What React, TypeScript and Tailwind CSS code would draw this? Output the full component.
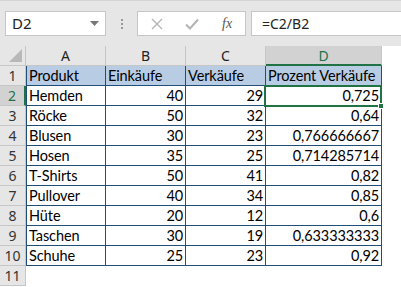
const rows = [
  { name: "Hemden", ek: 40, vk: 29, pct: "0,725" },
  { name: "Röcke", ek: 50, vk: 32, pct: "0,64" },
  { name: "Blusen", ek: 30, vk: 23, pct: "0,766666667" },
  { name: "Hosen", ek: 35, vk: 25, pct: "0,714285714" },
  { name: "T-Shirts", ek: 50, vk: 41, pct: "0,82" },
  { name: "Pullover", ek: 40, vk: 34, pct: "0,85" },
  { name: "Hüte", ek: 20, vk: 12, pct: "0,6" },
  { name: "Taschen", ek: 30, vk: 19, pct: "0,633333333" },
  { name: "Schuhe", ek: 25, vk: 23, pct: "0,92" },
];

const ui = { fontFamily: '"Noto Sans", "Open Sans", sans-serif' };
const cellFont = { fontFamily: 'Lato, "Liberation Sans", sans-serif' };

function RowHeader({ n, active }: { n: number; active?: boolean }) {
  return (
    <div
      style={ui}
      className={
        active
          ? "w-[26px] h-[20px] shrink-0 flex items-center justify-center bg-[#d2d2d2] text-[#217346] text-[14px] border-b border-[#c6c6c6] border-r-2 border-r-[#217346]"
          : "w-[26px] h-[20px] shrink-0 flex items-center justify-center bg-[#e6e6e6] text-[#333] text-[14px] border-b border-r border-[#c6c6c6]"
      }
    >
      {n}
    </div>
  );
}

function Toolbar() {
  return (
    <div className="h-[46px] bg-[#e6e6e6] border-t border-[#d4d4d4] flex items-start pt-[10px]">
      <div className="ml-[5px] w-[101px] h-[25px] bg-white border border-[#c6c6c6] flex items-center justify-between pl-[6px] pr-[6px]">
        <span style={ui} className="text-[15px] text-[#222]">D2</span>
        <svg width="9" height="5" viewBox="0 0 9 5">
          <path d="M0 0h9L4.5 5z" fill="#777" />
        </svg>
      </div>
      <div className="w-[31px] h-[25px] flex flex-col items-center justify-center gap-[2px]">
        <span className="w-[2px] h-[2px] bg-[#999]" />
        <span className="w-[2px] h-[2px] bg-[#999]" />
        <span className="w-[2px] h-[2px] bg-[#999]" />
      </div>
      <div className="w-[109px] h-[25px] bg-white border border-[#c6c6c6] flex items-center">
        <svg width="12" height="12" viewBox="0 0 12 12" className="ml-[13px]">
          <path d="M1 1l10 10M11 1L1 11" stroke="#b4b4b4" strokeWidth="1.4" />
        </svg>
        <svg width="14" height="12" viewBox="0 0 14 12" className="ml-[22px]">
          <path d="M1 6.5l4 4L13 1.5" stroke="#b4b4b4" strokeWidth="2" fill="none" />
        </svg>
        <span
          className="ml-[23px] text-[14px] italic text-[#555]"
          style={{ fontFamily: '"Liberation Serif", serif' }}
        >
          fx
        </span>
      </div>
      <div className="ml-[5px] flex-1 h-[25px] bg-white border border-[#c6c6c6] border-r-0 flex items-center pl-[10px]">
        <span style={ui} className="text-[14px] text-[#222]">=C2/B2</span>
      </div>
    </div>
  );
}

function ColumnHeaders() {
  const cols = ["A", "B", "C"];
  return (
    <div className="flex h-[20px]" style={ui}>
      <div className="w-[26px] h-[20px] shrink-0 bg-[#e6e6e6] border-r border-b border-[#c6c6c6] flex items-end justify-end pr-[3px] pb-[3px]">
        <svg width="13" height="13" viewBox="0 0 13 13">
          <path d="M13 0v13H0z" fill="#b8b8b8" />
        </svg>
      </div>
      {cols.map((c) => (
        <div
          key={c}
          className="w-[80px] h-[20px] shrink-0 bg-[#e6e6e6] border-r border-b border-[#c6c6c6] flex items-center justify-center text-[14px] text-[#222]"
        >
          {c}
        </div>
      ))}
      <div className="w-[116px] h-[20px] shrink-0 bg-[#d2d2d2] border-r border-[#c6c6c6] border-b-2 border-b-[#217346] flex items-center justify-center text-[14px] text-[#217346]">
        D
      </div>
      <div className="flex-1 h-[20px] bg-white" />
    </div>
  );
}

const cell =
  "h-[20px] shrink-0 border-r border-b border-[#1f4e79] flex items-end pb-[2px] text-[14.5px] tracking-[-0.1px] text-black px-[2px] leading-none whitespace-nowrap overflow-hidden";

export default function App() {
  return (
    <div className="w-[401px] h-[287px] bg-white overflow-hidden">
      <Toolbar />
      <ColumnHeaders />
      <div className="relative">
        <div className="flex" style={cellFont}>
          <RowHeader n={1} />
          <div className={`${cell} w-[80px] bg-[#b8cce4] border-l`}>Produkt</div>
          <div className={`${cell} w-[80px] bg-[#b8cce4]`}>Einkäufe</div>
          <div className={`${cell} w-[80px] bg-[#b8cce4]`}>Verkäufe</div>
          <div className={`${cell} w-[116px] bg-[#b8cce4]`}>Prozent Verkäufe</div>
        </div>
        {rows.map((r, i) => (
          <div className="flex" style={cellFont} key={r.name}>
            <RowHeader n={i + 2} active={i === 0} />
            <div className={`${cell} w-[80px] border-l`}>{r.name}</div>
            <div className={`${cell} w-[80px] justify-end`}>{r.ek}</div>
            <div className={`${cell} w-[80px] justify-end`}>{r.vk}</div>
            <div className={`${cell} w-[116px] justify-end`}>{r.pct}</div>
          </div>
        ))}
        <div className="flex">
          <RowHeader n={11} />
        </div>
        {/* active cell D2 */}
        <div className="absolute left-[264px] top-[19px] w-[118px] h-[22px] border-2 border-[#217346] pointer-events-none" />
        <div className="absolute left-[378px] top-[37px] w-[6px] h-[6px] bg-[#217346] border border-white" />
      </div>
    </div>
  );
}
